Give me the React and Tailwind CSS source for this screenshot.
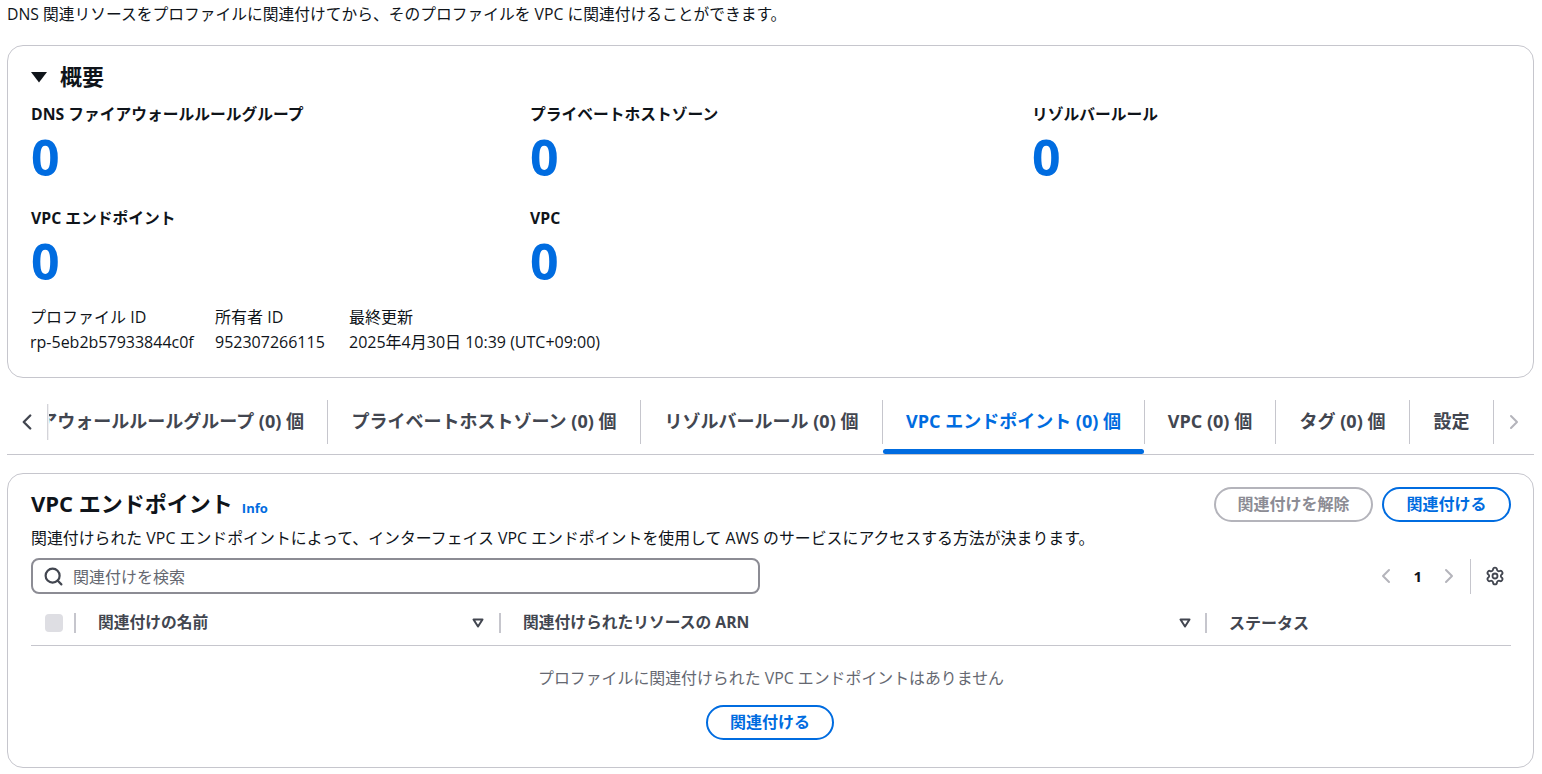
import React from "react";
import { ChevronLeft, ChevronRight, Search, Settings } from "lucide-react";

const Metric = ({ label, className = "" }) => (
  <div className={className}>
    <div className="text-[15.75px] font-bold leading-[20px] text-[#0f141a]">{label}</div>
    <div className="text-[50px] font-bold leading-[56px] text-[#006ce0] mt-[5px]">0</div>
  </div>
);

const Tab = ({ children, active, w }) => (
  <div className={`relative h-[44px] pb-[2px] flex items-center justify-center shrink-0 border-r border-[#c6c6cd] text-[18px] font-bold whitespace-nowrap ${w} ${active ? "text-[#006ce0]" : "text-[#424650]"}`}>
    {children}
    {active && <div className="absolute left-0 right-0 -bottom-[10px] h-[5px] rounded-[3px] bg-[#006ce0]" />}
  </div>
);

const Sort = () => (
  <svg width="12" height="10" viewBox="0 0 12 10" className="shrink-0">
    <path d="M1.5 1.5h9L6 8.5z" fill="none" stroke="#424650" strokeWidth="2" strokeLinejoin="round" />
  </svg>
);

const Sep = () => <div className="w-[2px] h-[20px] bg-[#c6c6cd] shrink-0" />;

export default function App() {
  return (
    <div className="w-[1542px] h-[774px] overflow-hidden bg-white text-[#0f141a] text-[16px]" style={{ fontFamily: '"Open Sans","Noto Sans CJK JP",sans-serif' }}>
      <div className="h-[45px] pl-[7px] pt-[4px] leading-[20px] text-[15.75px] text-[#0f141a]">
        DNS 関連リソースをプロファイルに関連付けてから、そのプロファイルを VPC に関連付けることができます。
      </div>

      <section className="ml-[7px] mr-[8px] h-[333px] rounded-[16px] border border-[#c6c6cd] pl-[23px] pt-[17px]">
        <div className="flex items-center h-[28px]">
          <svg width="16" height="12" viewBox="0 0 16 12"><path d="M0 1h16L8 11.5z" fill="#0f141a" /></svg>
          <h2 className="ml-[13px] -mt-[3px] text-[22px] font-bold leading-[28px]">概要</h2>
        </div>
        <div className="grid grid-cols-[499px_502px_1fr] mt-[13px]">
          <Metric label="DNS ファイアウォールルールグループ" />
          <Metric label="プライベートホストゾーン" />
          <Metric label="リゾルバールール" />
        </div>
        <div className="grid grid-cols-[499px_502px_1fr] mt-[23px]">
          <Metric label="VPC エンドポイント" />
          <Metric label="VPC" />
        </div>
        <div className="flex mt-[18px] -ml-[1px] leading-[20px] text-[16px]">
          <div className="w-[185px]"><div>プロファイル ID</div><div className="mt-[5px]">rp-5eb2b57933844c0f</div></div>
          <div className="w-[134px]"><div>所有者 ID</div><div className="mt-[5px]">952307266115</div></div>
          <div><div>最終更新</div><div className="mt-[5px]">2025年4月30日 10:39 (UTC+09:00)</div></div>
        </div>
      </section>

      <div className="relative ml-[7px] mr-[8px] mt-[21px] h-[56px] border-b border-[#c6c6cd] pt-[1px]">
        <div className="flex items-center h-[44px]">
          <div className="relative w-[41px] shrink-0 h-[36px] flex items-center">
            <ChevronLeft size={26} strokeWidth={2.2} className="ml-[7px] text-[#424650]" />
            <div className="absolute left-[40px] top-0 h-[36px] w-[2px] bg-gradient-to-r from-[#c6c6cd] to-white" />
          </div>
          <div className="w-[280px] shrink-0 h-[44px] pb-[2px] overflow-hidden flex items-center justify-end border-r border-[#c6c6cd] pr-[23px] text-[18px] font-bold text-[#424650] whitespace-nowrap">
            <span className="shrink-0">ファイアウォールルールグループ (0) 個</span>
          </div>
          <Tab w="w-[313px]">プライベートホストゾーン (0) 個</Tab>
          <Tab w="w-[242px]">リゾルバールール (0) 個</Tab>
          <Tab w="w-[262px]" active>VPC エンドポイント (0) 個</Tab>
          <Tab w="w-[131px]">VPC (0) 個</Tab>
          <Tab w="w-[134px]">タグ (0) 個</Tab>
          <Tab w="w-[84px]">設定</Tab>
          <ChevronRight size={24} className="ml-[8px] text-[#b4b4bb]" />
        </div>
      </div>

      <section className="ml-[7px] mr-[8px] mt-[18px] h-[295px] rounded-[16px] border border-[#c6c6cd] pt-[13px] pl-[23px] pr-[22px]">
        <div className="flex justify-between h-[36px]">
          <div className="flex items-baseline pt-[1px]">
            <h2 className="text-[22px] font-bold leading-[30px]">VPC エンドポイント</h2>
            <span className="ml-[9px] translate-y-[1px] text-[13px] font-bold text-[#006ce0]">Info</span>
          </div>
          <div className="flex gap-[9px]">
            <button className="w-[159px] h-[35px] pb-[2px] rounded-[20px] border-2 border-[#b4b4bb] text-[16px] font-bold text-[#8c8c94]">関連付けを解除</button>
            <button className="w-[129px] h-[35px] pb-[2px] rounded-[20px] border-2 border-[#006ce0] text-[16px] font-bold text-[#006ce0]">関連付ける</button>
          </div>
        </div>
        <div className="leading-[20px] mt-[5px] text-[15.9px]">関連付けられた VPC エンドポイントによって、インターフェイス VPC エンドポイントを使用して AWS のサービスにアクセスする方法が決まります。</div>
        <div className="flex justify-between items-center mt-[10px]">
          <div className="w-[729px] h-[36px] rounded-[8px] border-2 border-[#8c8c94] flex items-center pl-[10px]">
            <Search size={21} strokeWidth={2.5} className="text-[#424650]" />
            <span className="ml-[9px] pt-[2px] text-[#656871]">関連付けを検索</span>
          </div>
          <div className="flex items-center h-[36px]">
            <ChevronLeft size={24} className="text-[#b4b4bb]" />
            <span className="mx-[15px] font-bold text-[15px]">1</span>
            <ChevronRight size={24} className="text-[#b4b4bb]" />
            <div className="w-px h-[35px] bg-[#c6c6cd] ml-[9px] mr-[14px]" />
            <Settings size={20} strokeWidth={2.2} className="text-[#424650] mr-[6px]" />
          </div>
        </div>
        <div className="flex items-center h-[46px] border-b border-[#c6c6cd] mt-[6px] font-bold text-[#424650] text-[15.75px]">
          <div className="w-[18px] h-[18px] rounded-[4px] bg-[#dedee3] ml-[14px]" />
          <div className="ml-[11px]"><Sep /></div>
          <div className="ml-[22px] w-[400px] flex justify-between items-center pr-[14px]"><span>関連付けの名前</span><Sort /></div>
          <div className="ml-[1px]"><Sep /></div>
          <div className="ml-[22px] w-[656px]"><span>関連付けられたリソースの ARN</span></div>
          <Sort />
          <div className="ml-[14px]"><Sep /></div>
          <div className="ml-[22px] text-[16px]">ステータス</div>
        </div>
        <div className="flex flex-col items-center">
          <div className="mt-[21px] text-[15.9px] leading-[22px] text-[#656871]">プロファイルに関連付けられた VPC エンドポイントはありません</div>
          <button className="mt-[16px] -ml-[2px] w-[128px] h-[35px] pb-[2px] rounded-[20px] border-2 border-[#006ce0] text-[16px] font-bold text-[#006ce0]">関連付ける</button>
        </div>
      </section>
    </div>
  );
}
